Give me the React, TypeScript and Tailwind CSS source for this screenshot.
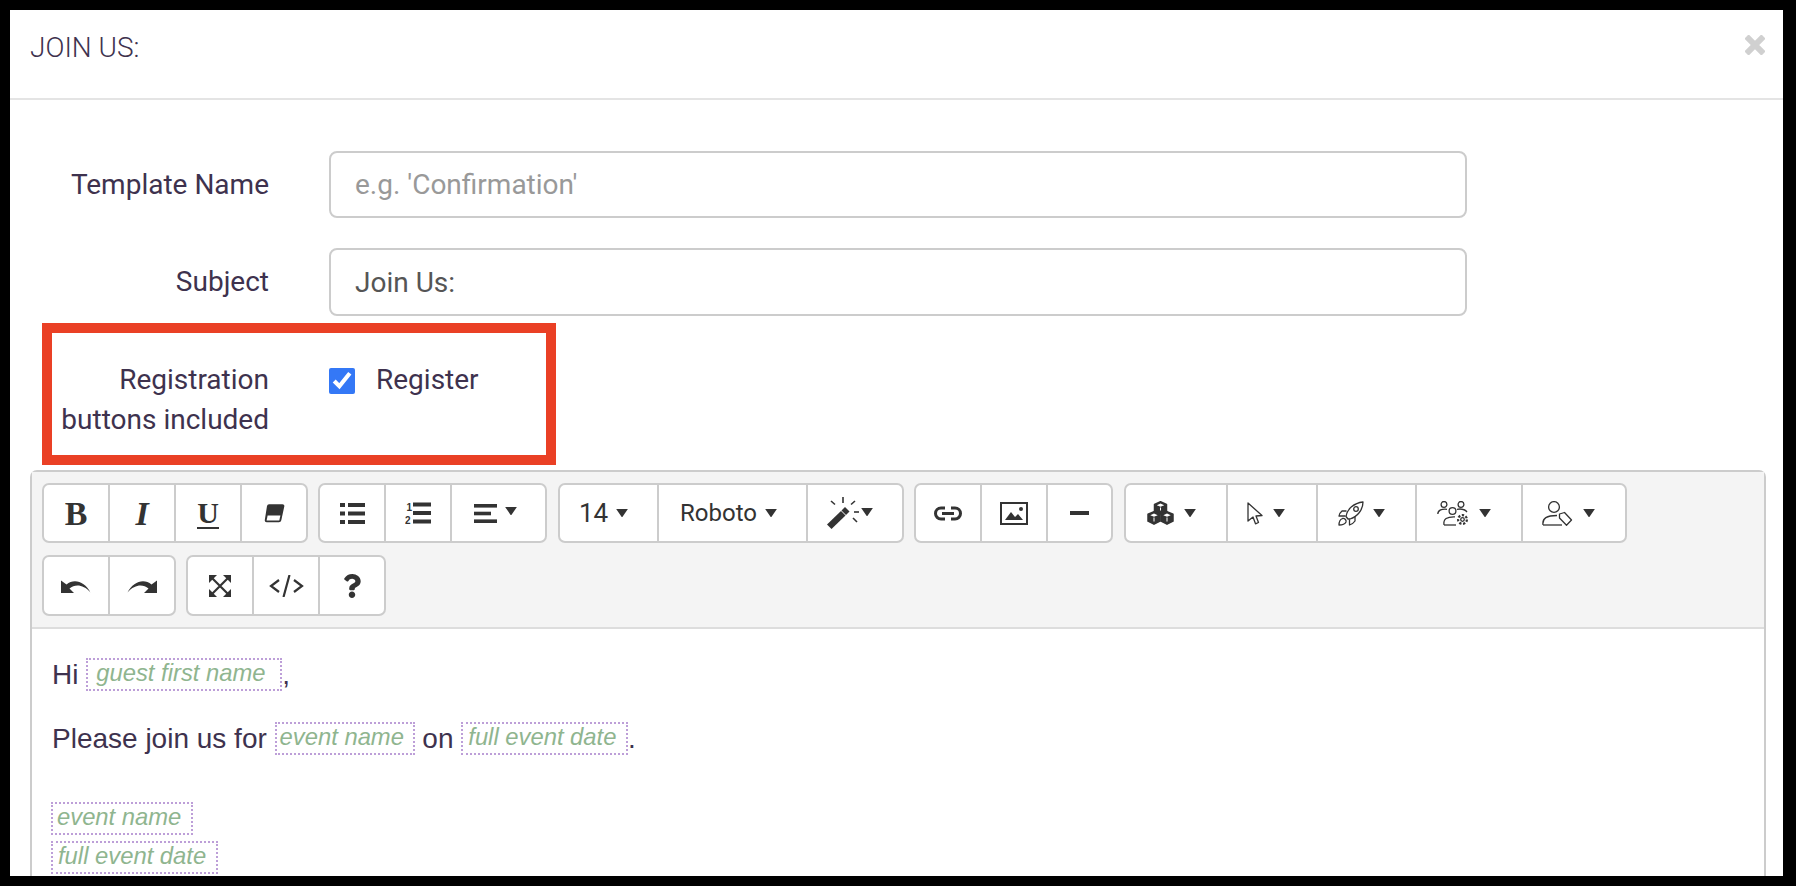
import React from "react";
import { FaQuestion } from "react-icons/fa";

const Caret = ({ className = "" }: { className?: string }) => (
  <svg width="12" height="8.5" viewBox="0 0 11 8" className={className}>
    <polygon points="0,0 11,0 5.5,8" fill="#333" />
  </svg>
);

const Bullets = () => (
  <svg width="25" height="21" viewBox="0 0 25 21" fill="#333">
    <rect x="0" y="0" width="5" height="4" />
    <rect x="8" y="0" width="17" height="4" />
    <rect x="0" y="8.5" width="5" height="4" />
    <rect x="8" y="8.5" width="17" height="4" />
    <rect x="0" y="17" width="5" height="4" />
    <rect x="8" y="17" width="17" height="4" />
  </svg>
);

const Numbers = () => (
  <svg width="26" height="22" viewBox="0 0 26 22" fill="#333">
    <text x="1.5" y="9" fontSize="10" fontWeight="700" fontFamily="Liberation Sans, sans-serif">1</text>
    <text x="0" y="21.5" fontSize="10" fontWeight="700" fontFamily="Liberation Sans, sans-serif">2</text>
    <rect x="8" y="0.5" width="18" height="4" />
    <rect x="8" y="9" width="18" height="4" />
    <rect x="8" y="17.5" width="18" height="4" />
  </svg>
);

const AlignLeft = () => (
  <svg width="23" height="19" viewBox="0 0 23 19" fill="#333">
    <rect width="23" height="3.6" />
    <rect y="7.7" width="17" height="3.6" />
    <rect y="15.4" width="23" height="3.6" />
  </svg>
);

const Eraser = () => (
  <svg width="21" height="20" viewBox="0 0 21 20">
    <path d="M5 1.2h13.5q2.2 0 1.8 2.2l-3 13.8q-.4 2-2.4 2H2.6q-2.2 0-1.8-2.2L3 3q.4-1.8 2-1.8z" fill="#333" />
    <path d="M3.6 12.4h12.8l-1.1 5H2.6z" fill="#fff" />
  </svg>
);

const Undo = ({ flip = false }: { flip?: boolean }) => (
  <svg width="30" height="14" viewBox="0 0 30 14" className={flip ? "-scale-x-100" : ""}>
    <path d="M0 1.5 L0 14 L13 14 L8.5 9.5 C14 5 22 5 29.5 13.5 C24 2.5 13 -1 5.5 5.5 Z" fill="#333" />
  </svg>
);

const Expand = () => (
  <svg width="22" height="22" viewBox="0 0 22 22" fill="none">
    <path d="M3 3 L19 19 M19 3 L3 19" stroke="#333" strokeWidth="2.2" />
    <polygon points="0,0 8,0 0,8" fill="#333" />
    <polygon points="22,0 14,0 22,8" fill="#333" />
    <polygon points="0,22 8,22 0,14" fill="#333" />
    <polygon points="22,22 14,22 22,14" fill="#333" />
  </svg>
);

const Code = () => (
  <svg width="35" height="22" viewBox="0 0 35 22" fill="none" stroke="#333" strokeWidth="2.2">
    <path d="M10 5 L2 11 L10 17" />
    <path d="M25 5 L33 11 L25 17" />
    <path d="M20.5 0 L14.5 22" />
  </svg>
);

const Wand = () => (
  <svg width="33" height="32" viewBox="0 0 33 32">
    <path d="M0 27.5 L14 14 L18.5 18.5 L4.5 32 Z" fill="#333" />
    <path d="M14.5 13.5 L18 10 L22.5 14.5 L19 18 Z" fill="#333" />
    <g stroke="#333" strokeWidth="1.6">
      <path d="M16 0v6" />
      <path d="M4 4l4 3.5" />
      <path d="M28 4l-4 3.5" />
      <path d="M26 21l4 4" />
      <path d="M27 15h5" />
    </g>
  </svg>
);

const LinkIcon = () => (
  <svg width="28" height="15" viewBox="0 0 28 15" fill="none" stroke="#333" strokeWidth="3">
    <path d="M11 2h-4a5.5 5.5 0 0 0 0 11h4" />
    <path d="M17 2h4a5.5 5.5 0 0 1 0 11h-4" />
    <path d="M8 7.5h12" />
  </svg>
);

const Picture = () => (
  <svg width="28" height="23" viewBox="0 0 28 23">
    <rect x="1" y="1" width="26" height="21" fill="none" stroke="#333" strokeWidth="2" />
    <path d="M5 18 L11 10 L15 15 L18 12 L23 18 Z" fill="#333" />
    <circle cx="21" cy="7" r="2" fill="#333" />
  </svg>
);

// three solid cubes, white top faces and edges
const Cubes = () => (
  <svg width="27" height="24" viewBox="0 0 27 24">
    <g fill="#333" stroke="#333" strokeWidth="1.5" strokeLinejoin="round">
      <polygon points="13.5,0.8 19.5,3.4 19.5,10.4 13.5,13 7.5,10.4 7.5,3.4" />
      <polygon points="7,10.6 13,13.2 13,20.2 7,23.2 1,20.2 1,13.2" />
      <polygon points="20,10.6 26,13.2 26,20.2 20,23.2 14,20.2 14,13.2" />
    </g>
    <g fill="#fff">
      <polygon points="13.5,2.6 17.2,4.2 13.5,5.8 9.8,4.2" />
      <polygon points="7,12.6 10.7,14.2 7,15.8 3.3,14.2" />
      <polygon points="20,12.6 23.7,14.2 20,15.8 16.3,14.2" />
    </g>
    <g stroke="#fff" strokeWidth="1">
      <path d="M13.5 6.5v3" />
      <path d="M7 16.5v4" />
      <path d="M20 16.5v4" />
    </g>
  </svg>
);

const Pointer = () => (
  <svg width="16" height="23" viewBox="0 0 16 23" fill="none" stroke="#333" strokeWidth="1.3" strokeLinejoin="round">
    <path d="M1 1 L15 13.5 L9 14 L11.5 20.5 L8.5 21.8 L6 15 L1 19 Z" />
  </svg>
);

const Rocket = () => (
  <svg width="26" height="25" viewBox="0 0 26 25" fill="none" stroke="#333" strokeWidth="1.3" strokeLinejoin="round">
    <path d="M10 18 L8 15.5 C9 8 16 2 25 1 C25 9 19 16 12 18 Z" />
    <circle cx="18" cy="8" r="2.3" />
    <path d="M8.5 10 L4 10 Q1.5 12 1 15 L7.5 15" />
    <path d="M17 15.5 V20 Q15 23 11.5 24 V18.5" />
    <path d="M4.5 17.5 C2 18.5 1 21 1 24 C4 24 7 23 8 21 C8.5 19 6.5 17 4.5 17.5 Z" />
  </svg>
);

const UsersGear = () => (
  <svg width="32" height="25" viewBox="0 0 32 25" fill="none" stroke="#333" strokeWidth="1.3">
    <circle cx="7" cy="3.4" r="2.9" />
    <circle cx="24" cy="3.4" r="2.9" />
    <circle cx="15.5" cy="10" r="3.4" />
    <path d="M0.8 13 C1 9 5 7.8 10 8.3" />
    <path d="M20 8.3 C24 7.6 28 8.5 30 11" />
    <path d="M7 24 C6 18 10 15.5 18 15.8" />
    <path d="M7 24 H19" />
    <circle cx="25.5" cy="18.5" r="4.4" strokeWidth="2.2" strokeDasharray="2.3 1.6" />
    <circle cx="25.5" cy="18.5" r="1.8" />
  </svg>
);

const UserTag = () => (
  <svg width="31" height="25" viewBox="0 0 31 25" fill="none" stroke="#333" strokeWidth="1.3" strokeLinejoin="round">
    <circle cx="12" cy="6" r="5.4" />
    <path d="M1 24 C0 17 5 14.5 15 14.5" />
    <path d="M1 24 H20" />
    <path d="M17.5 13 L22.5 11.5 L29.5 19 L24.5 24.2 L17.5 17 Z" />
  </svg>
);

const Btn = ({ w, children, first }: { w: string; children: React.ReactNode; first?: boolean }) => (
  <div className={`${w} ${first ? "" : "border-l-2 border-[#ccc]"} flex h-full shrink-0 items-center justify-center`}>
    {children}
  </div>
);

const Group = ({ className = "", children }: { className?: string; children: React.ReactNode }) => (
  <div className={`flex h-full shrink-0 overflow-hidden rounded-[7px] border-2 border-[#ccc] bg-white ${className}`}>{children}</div>
);

const Placeholder = ({ className = "", children }: { className?: string; children: React.ReactNode }) => (
  <span className={`inline-block h-[33px] border-2 border-dotted border-[#bd9fd8] align-top text-[23.8px] leading-[26px] text-[#8fb58f] italic ${className}`}>
    {children}
  </span>
);

export default function App() {
  return (
    <div className="h-[886px] overflow-hidden bg-black pt-[10px] pr-[13px] pb-[10px] pl-[10px] font-['Roboto',sans-serif] text-[#3e324e]">
      <div className="flex h-full flex-col overflow-hidden bg-white">
        <div className="flex h-[90px] shrink-0 items-center justify-between border-b-2 border-[#e4e4e4] pr-[18px] pb-[12px] pl-[20px]">
          <div className="text-[28px] font-light">JOIN US:</div>
          <svg width="20" height="20" viewBox="0 0 20 20" stroke="#d0d0d0" strokeWidth="6" className="mb-[6px]">
            <path d="M1.5 1.5 L18.5 18.5 M18.5 1.5 L1.5 18.5" />
          </svg>
        </div>

        <div className="mt-[51px] flex items-center">
          <label className="w-[259px] text-right text-[28px]">Template Name</label>
          <input
            placeholder="e.g. 'Confirmation'"
            className="ml-[60px] h-[67px] w-[1138px] rounded-[8px] border-2 border-[#ccc] px-[24px] text-[28px] text-[#555] placeholder:text-[#999]"
          />
        </div>
        <div className="mt-[30px] flex items-center">
          <label className="w-[259px] text-right text-[28px]">Subject</label>
          <input
            defaultValue="Join Us:"
            className="ml-[60px] h-[68px] w-[1138px] rounded-[8px] border-2 border-[#ccc] px-[24px] text-[28px] text-[#555]"
          />
        </div>

        <div className="mt-[7px] ml-[32px] flex h-[142px] w-[514px] shrink-0 border-[10px] border-[#ea4025] pt-[27px] text-[28px] leading-[40px]">
          <div className="w-[217px] text-right whitespace-nowrap">
            Registration
            <br />
            buttons included
          </div>
          <input type="checkbox" defaultChecked className="mt-[8px] ml-[60px] h-[26px] w-[26px] accent-[#3478f6]" />
          <span className="ml-[21px]">Register</span>
        </div>

        <div className="mt-[5px] ml-[20px] flex w-[1736px] grow flex-col rounded-t-[7px] border-x-2 border-t-2 border-[#ccc]">
          <div className="flex flex-col gap-[12px] border-b-2 border-[#ddd] bg-[#f4f4f4] pt-[11px] pb-[11px] pl-[10px]">
            <div className="flex h-[60px] gap-[11px]">
              <Group>
                <Btn w="w-[64px]" first>
                  <span className="font-['Liberation_Serif',serif] text-[34px] font-bold text-[#333]">B</span>
                </Btn>
                <Btn w="w-[66px]">
                  <span className="font-['Liberation_Serif',serif] text-[34px] font-bold text-[#333] italic">I</span>
                </Btn>
                <Btn w="w-[66px]">
                  <span className="border-b-2 border-[#333] font-['Liberation_Serif',serif] text-[30px] leading-[29px] font-bold text-[#333]">U</span>
                </Btn>
                <Btn w="w-[66px]">
                  <Eraser />
                </Btn>
              </Group>
              <Group className="-ml-[1px]">
                <Btn w="w-[64px]" first>
                  <Bullets />
                </Btn>
                <Btn w="w-[66px]">
                  <Numbers />
                </Btn>
                <Btn w="w-[95px]">
                  <div className="flex items-center pr-[6px]">
                    <AlignLeft />
                    <Caret className="mb-[4px] ml-[8px]" />
                  </div>
                </Btn>
              </Group>
              <Group>
                <Btn w="w-[97px]" first>
                  <div className="flex items-center pr-[10px]">
                    <span className="text-[26px] text-[#333]">14</span>
                    <Caret className="ml-[8px]" />
                  </div>
                </Btn>
                <Btn w="w-[149px]">
                  <div className="flex items-center pr-[8px]">
                    <span className="text-[24px] text-[#333]">Roboto</span>
                    <Caret className="ml-[8px]" />
                  </div>
                </Btn>
                <Btn w="w-[96px]">
                  <div className="flex items-center pr-[10px]">
                    <Wand />
                    <Caret className="mb-[2px] ml-[1px]" />
                  </div>
                </Btn>
              </Group>
              <Group className="-ml-[1px]">
                <Btn w="w-[64px]" first>
                  <LinkIcon />
                </Btn>
                <Btn w="w-[66px]">
                  <Picture />
                </Btn>
                <Btn w="w-[65px]">
                  <div className="h-[4px] w-[19px] bg-[#333]" />
                </Btn>
              </Group>
              <Group>
                <Btn w="w-[100px]" first>
                  <div className="flex items-center pr-[10px]">
                    <Cubes />
                    <Caret className="ml-[10px]" />
                  </div>
                </Btn>
                <Btn w="w-[90px]">
                  <div className="flex items-center pr-[12px]">
                    <Pointer />
                    <Caret className="ml-[10px]" />
                  </div>
                </Btn>
                <Btn w="w-[99px]">
                  <div className="flex items-center pr-[11px]">
                    <Rocket />
                    <Caret className="ml-[9px]" />
                  </div>
                </Btn>
                <Btn w="w-[106px]">
                  <div className="flex items-center pr-[10px]">
                    <UsersGear />
                    <Caret className="ml-[10px]" />
                  </div>
                </Btn>
                <Btn w="w-[104px]">
                  <div className="flex items-center pr-[12px]">
                    <UserTag />
                    <Caret className="ml-[10px]" />
                  </div>
                </Btn>
              </Group>
            </div>
            <div className="flex h-[61px] gap-[10px]">
              <Group>
                <Btn w="w-[64px]" first>
                  <Undo />
                </Btn>
                <Btn w="w-[66px]">
                  <Undo flip />
                </Btn>
              </Group>
              <Group>
                <Btn w="w-[64px]" first>
                  <Expand />
                </Btn>
                <Btn w="w-[66px]">
                  <Code />
                </Btn>
                <Btn w="w-[66px]">
                  <FaQuestion className="text-[24px] text-[#333]" />
                </Btn>
              </Group>
            </div>
          </div>

          <div className="pt-[26px] pl-[20px] font-['Liberation_Sans',sans-serif] text-[28px] leading-[40px]">
            <p className="mb-[24px]">
              Hi <Placeholder className="mt-[3px] px-[8px]">guest first name&nbsp;</Placeholder>,
            </p>
            <p className="mb-[39px]">
              Please join us for <Placeholder className="mt-[3px] pr-[2px] pl-[3px]">event name&nbsp;</Placeholder> on{" "}
              <Placeholder className="mt-[3px] pr-[3px] pl-[5px]">full event date&nbsp;</Placeholder>.
            </p>
            <div className="-ml-[1px] flex h-[40px] items-center">
              <Placeholder className="pr-[3px] pl-[4px]">event name&nbsp;</Placeholder>
            </div>
            <div className="-ml-[1px] flex h-[40px] items-start">
              <Placeholder className="mt-[3px] pr-[3px] pl-[5px]">full event date&nbsp;</Placeholder>
            </div>
          </div>
        </div>
      </div>
    </div>
  );
}
